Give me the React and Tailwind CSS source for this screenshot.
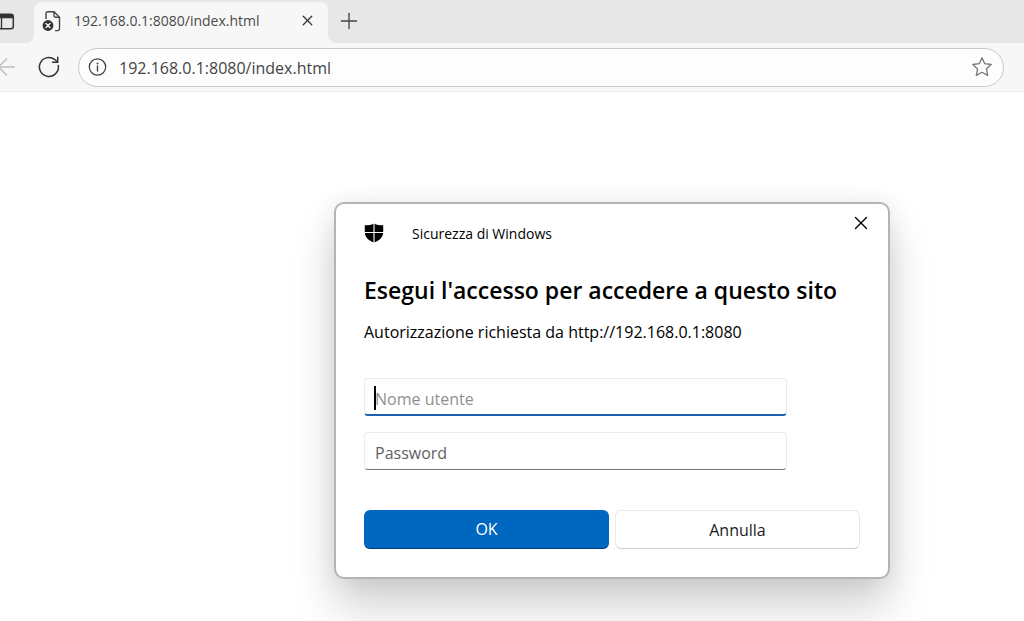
import React, { useState } from "react";
import { X, Plus } from "lucide-react";

const App = () => {
  return (
    <div className="flex min-h-screen flex-col overflow-hidden bg-white font-['Open_Sans','Noto_Sans',sans-serif]">
      <header className="border-b border-[#ececec] bg-[#f7f7f7]">
        <TabStrip />
        <AddressBar />
      </header>

      <main className="flex-1 pt-[110px] pr-4 pl-[334px]">
        <LoginDialog />
      </main>
    </div>
  );
};

const TabStrip = () => {
  return (
    <div className="flex h-[43px]">
      <div className="flex w-[34px] items-center rounded-br-lg bg-[#e7e7e7]">
        <button aria-label="Menu schede" className="-ml-1">
          <TabMenuIcon />
        </button>
      </div>

      <div className="bg-[#e7e7e7] pt-0.5">
        <div className="flex h-full w-[294px] items-center rounded-t-lg bg-[#f7f7f7] pr-3 pb-1 pl-2">
          <BrokenPageIcon />
          <span className="ml-3 flex-1 truncate text-sm text-[#4a4a4a]">
            192.168.0.1:8080/index.html
          </span>
          <button aria-label="Chiudi scheda" className="text-[#333]">
            <X size={17} strokeWidth={1.75} />
          </button>
        </div>
      </div>

      <div className="flex-1 rounded-bl-lg bg-[#e7e7e7] pt-2 pl-2">
        <button aria-label="Nuova scheda" className="text-[#444]">
          <Plus size={26} strokeWidth={1.25} />
        </button>
      </div>
    </div>
  );
};

const AddressBar = () => {
  const [url, setUrl] = useState("192.168.0.1:8080/index.html");

  return (
    <div className="flex h-12 items-center pr-5">
      <button aria-label="Indietro" className="-ml-1">
        <BackIcon />
      </button>
      <button aria-label="Aggiorna" className="ml-5">
        <ReloadIcon />
      </button>

      <div className="ml-4 flex h-[39px] flex-1 items-center rounded-full border border-[#c9c9c9] bg-[#fdfdfd] px-2">
        <button aria-label="Informazioni sul sito">
          <InfoIcon />
        </button>
        <input
          aria-label="Indirizzo"
          className="ml-3 min-w-0 flex-1 bg-transparent pt-0.5 text-base text-[#444] outline-none"
          value={url}
          onChange={(e) => setUrl(e.target.value)}
        />
        <button aria-label="Aggiungi ai preferiti" className="mr-0.5">
          <StarIcon />
        </button>
      </div>
    </div>
  );
};

const LoginDialog = () => {
  const [username, setUsername] = useState("");
  const [password, setPassword] = useState("");

  return (
    <form
      role="dialog"
      aria-labelledby="dialog-title"
      onSubmit={(e) => e.preventDefault()}
      className="w-full max-w-[556px] rounded-[10px] border-2 border-[#b4b4b4] bg-white px-7 pb-7 text-black shadow-[0_28px_44px_rgba(0,0,0,0.18),0_0_24px_rgba(0,0,0,0.08)]"
    >
      <div className="flex items-start pt-1">
        <div className="flex flex-1 items-center pt-3">
          <ShieldIcon />
          <span className="ml-7 pt-0.5 text-sm leading-6">Sicurezza di Windows</span>
        </div>
        <button type="button" aria-label="Chiudi" className="-mr-4 p-1">
          <X size={22} strokeWidth={1.5} />
        </button>
      </div>

      <h1 id="dialog-title" className="mt-7 text-[23px] leading-8 font-semibold">
        Esegui l'accesso per accedere a questo sito
      </h1>
      <p className="mt-3.5 text-base">
        Autorizzazione richiesta da http://192.168.0.1:8080
      </p>

      <div className="mt-8.5 mr-[73px] space-y-4">
        <div className="relative">
          <input
            aria-label="Nome utente"
            placeholder="Nome utente"
            className="block h-[38px] w-full rounded border border-b-2 border-[#ececec] border-b-[#1a62b0] px-2.5 pt-1 text-base outline-none placeholder:text-[#8f8f8f]"
            value={username}
            onChange={(e) => setUsername(e.target.value)}
          />
          {!username && (
            <span className="absolute top-2 left-2.5 h-6 w-0.5 bg-black" />
          )}
        </div>
        <input
          type="password"
          aria-label="Password"
          placeholder="Password"
          className="block h-[38px] w-full rounded border border-[#ececec] border-b-[#777] px-2.5 pt-1 text-base outline-none placeholder:text-[#616161]"
          value={password}
          onChange={(e) => setPassword(e.target.value)}
        />
      </div>

      <div className="mt-10 grid grid-cols-2 gap-1.5">
        <button
          type="submit"
          className="h-[39px] rounded-md border-b border-[#003e7d] bg-[#0067c0] text-base text-white"
        >
          OK
        </button>
        <button
          type="button"
          className="h-[39px] rounded-md border border-[#e8e8e8] border-b-[#cfcfcf] bg-white text-base text-[#1a1a1a]"
        >
          Annulla
        </button>
      </div>
    </form>
  );
};

const TabMenuIcon = () => (
  <svg width="20" height="20" viewBox="0 0 20 20" fill="none">
    <rect x="1.7" y="2.2" width="15.6" height="14.6" rx="2.5" stroke="#333" strokeWidth="1.5" />
    <path d="M1.7 6.3V4.500a2.3 2.3 0 0 1 2.3-2.3h11a2.3 2.3 0 0 1 2.3 2.3v1.800z" fill="#333" />
    <path d="M5.5 6v11" stroke="#333" strokeWidth="1.3" />
  </svg>
);

const BrokenPageIcon = () => (
  <svg width="20" height="22" viewBox="0 0 20 22" fill="none">
    <path
      d="M4 9V3.5A1.8 1.8 0 0 1 5.8 1.7H12l5.500 5.500v11.600a1.8 1.8 0 0 1-1.8 1.8H13"
      stroke="#444"
      strokeWidth="1.4"
    />
    <path d="M12 1.7V5.500a1.7 1.7 0 0 0 1.7 1.7H17.500" stroke="#444" strokeWidth="1.4" />
    <circle cx="6" cy="15.5" r="5.4" fill="#333" />
    <path d="M4 13.5l4 4m0-4l-4 4" stroke="#fff" strokeWidth="1.3" strokeLinecap="round" />
  </svg>
);

const BackIcon = () => (
  <svg width="20" height="20" viewBox="0 0 20 20" fill="none" stroke="#bdbdbd" strokeWidth="1.3">
    <path d="M19 10H2.5M11 1.5L2.5 10l8.5 8.5" />
  </svg>
);

const ReloadIcon = () => (
  <svg width="26" height="26" viewBox="0 0 26 26" fill="none" stroke="#333" strokeWidth="1.5" strokeLinecap="round">
    <path d="M22.3 11.5A9.5 9.5 0 1 1 18.5 5.3L21.5 8" />
    <path d="M21.700 3.3V8.2H16.5" />
  </svg>
);

const InfoIcon = () => (
  <svg width="20" height="20" viewBox="0 0 20 20" fill="none">
    <circle cx="10.500" cy="10" r="8.2" stroke="#444" strokeWidth="1.3" />
    <path d="M10.500 9v5" stroke="#444" strokeWidth="1.4" strokeLinecap="round" />
    <circle cx="10.500" cy="6.5" r="0.95" fill="#444" />
  </svg>
);

const StarIcon = () => (
  <svg width="22" height="22" viewBox="0 0 22 22" fill="none" stroke="#777" strokeWidth="1.3" strokeLinejoin="round">
    <path d="M11 1.800L13.700 7.700L20.200 8.500L15.400 12.900L16.700 19.400L11 16.300L5.300 19.400L6.600 12.900L1.800 8.500L8.300 7.700Z" />
  </svg>
);

const ShieldIcon = () => (
  <svg width="20" height="20" viewBox="0 0 20 20">
    <path
      d="M10 0.5C7.5 2 4 2.3 0.8 2.3V9C0.8 14 4.5 17.7 10 19.5C15.5 17.7 19.2 14 19.2 9V2.3C16 2.3 12.5 2 10 0.5Z"
      fill="#000"
    />
    <path d="M10 0v20M0 9.5h20" stroke="#fff" strokeWidth="1.1" />
  </svg>
);

export default App;
